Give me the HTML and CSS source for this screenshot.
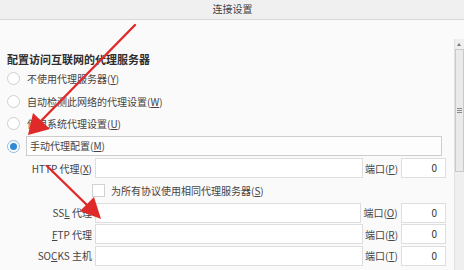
FILE: index.html
```html
<!DOCTYPE html>
<html lang="zh-CN">
<head>
    <meta charset="UTF-8">
    <title>连接设置</title>
    <link rel="stylesheet" href="styles.css">
</head>
<body>
    <div class="window">
        <div class="titlebar">连接设置</div>
        <div class="main">
            <div class="content">
                <h2 class="heading">配置访问互联网的代理服务器</h2>

                <label class="radio-row"><span class="radio"></span>不使用代理服务器(<u>Y</u>)</label>
                <label class="radio-row"><span class="radio"></span>自动检测此网络的代理设置(<u>W</u>)</label>
                <label class="radio-row"><span class="radio"></span>使用系统代理设置(<u>U</u>)</label>
                <label class="radio-row"><span class="radio checked"></span><span class="focus">手动代理配置(<u>M</u>)</span></label>

                <div class="proxy-row first">
                    <span class="proxy-label">HTTP 代理(<u>X</u>)</span>
                    <span class="field"></span>
                    <span class="port-label">端口(<u>P</u>)</span>
                    <span class="port">0</span>
                </div>
                <div class="check-row">
                    <span class="checkbox"></span>为所有协议使用相同代理服务器(<u>S</u>)
                </div>
                <div class="proxy-row">
                    <span class="proxy-label">SS<u>L</u> 代理</span>
                    <span class="field short"></span>
                    <span class="port-label">端口(<u>O</u>)</span>
                    <span class="port">0</span>
                </div>
                <div class="proxy-row">
                    <span class="proxy-label"><u>F</u>TP 代理</span>
                    <span class="field"></span>
                    <span class="port-label">端口(<u>R</u>)</span>
                    <span class="port">0</span>
                </div>
                <div class="proxy-row">
                    <span class="proxy-label">SO<u>C</u>KS 主机</span>
                    <span class="field"></span>
                    <span class="port-label">端口(<u>T</u>)</span>
                    <span class="port">0</span>
                </div>
            </div>
            <div class="scrollbar">
                <div class="scroll-up"></div>
                <div class="thumb"><span class="grip"></span></div>
                <div class="track"></div>
            </div>
        </div>

        <!-- annotation arrows drawn over the dialog -->
        <svg class="arrows" width="464" height="270" viewBox="0 0 464 270">
            <g stroke="#e02a2a" stroke-width="2.4" stroke-linecap="round" fill="#e02a2a">
                <line x1="135" y1="25" x2="38" y2="124"/>
                <polygon points="28,135 33,113 50,129" stroke="none"/>
                <line x1="47" y1="166" x2="90" y2="208"/>
                <polygon points="101,219 80,211 94,197" stroke="none"/>
            </g>
        </svg>
    </div>
</body>
</html>
```

FILE: styles.css
```css
body {
    margin: 0;
    font-family: "Noto Sans CJK SC", "Noto Sans", sans-serif;
    color: #3a3a3a;
    background: #fbfafb;
}

.window {
    position: relative;
    width: 464px;
    height: 270px;
    overflow: hidden;
    display: flex;
    flex-direction: column;
}

.titlebar {
    height: 19px;
    line-height: 17px;
    text-align: center;
    font-size: 10px;
    color: #444;
    background: #f1f0f1;
    border-bottom: 1px solid #d8d7d8;
    padding-left: 1px;
}

.main {
    flex: 1;
    display: flex;
}

.content {
    flex: 1;
    padding: 31px 0 0 7px;
}

.heading {
    margin: 0;
    font-size: 11px;
    font-weight: 600;
    line-height: 16px;
    color: #2e2e2e;
}

.radio-row {
    display: flex;
    align-items: center;
    height: 22.7px;
    font-size: 10px;
    color: #444;
}

.radio {
    width: 11px;
    height: 11px;
    border: 1px solid #cfcfcf;
    border-radius: 50%;
    background: #fff;
    margin-right: 7px;
    flex: none;
    display: flex;
    align-items: center;
    justify-content: center;
}

.radio.checked {
    border-color: #8fb8dc;
}

.radio.checked::after {
    content: "";
    width: 7px;
    height: 7px;
    border-radius: 50%;
    background: #2f8ad6;
}

.focus {
    flex: none;
    width: 411px;
    height: 18px;
    line-height: 18px;
    padding-left: 3px;
    margin-left: -1px;
    border: 1px solid #cdcdcd;
    background: #fdfdfd;
}

.proxy-row {
    display: flex;
    align-items: center;
    height: 19px;
    margin-top: 2.5px;
    font-size: 10px;
    color: #444;
}

.proxy-row.first {
    margin-top: 1px;
}

.proxy-label {
    width: 85px;
    text-align: right;
    margin-right: 3px;
}

.field {
    width: 266px;
    height: 18px;
    border: 1px solid #dedede;
    background: #fff;
}

.field.short {
    width: 264px;
}

.port-label {
    flex: 1;
    text-align: center;
    max-width: 37px;
    padding-right: 1px;
}

.field.short + .port-label {
    max-width: 39px;
}

.port {
    width: 35px;
    height: 18px;
    line-height: 18px;
    text-align: right;
    padding-right: 8px;
    border: 1px solid #dedede;
    background: #fff;
    font-size: 10px;
    color: #333;
}

.check-row {
    display: flex;
    align-items: center;
    height: 21px;
    margin-top: 2px;
    padding-left: 85px;
    font-size: 10px;
    color: #444;
}

.checkbox {
    width: 11px;
    height: 11px;
    border: 1px solid #d2d2d2;
    background: #fff;
    margin-right: 6px;
}

.scrollbar {
    width: 9px;
    margin-top: 19px;
    display: flex;
    flex-direction: column;
    background: #f0eff0;
    border-left: 1px solid #e2e2e2;
}

.scroll-up {
    height: 10px;
    position: relative;
}

.scroll-up::after {
    content: "";
    position: absolute;
    left: 2px;
    top: 4px;
    border-left: 2px solid transparent;
    border-right: 2px solid transparent;
    border-bottom: 3px solid #777;
}

.thumb {
    height: 121px;
    background: #ebeaeb;
    border: 1px solid #c9c9c9;
    display: flex;
    align-items: center;
    justify-content: center;
}

.grip {
    width: 5px;
    height: 5px;
    background: repeating-linear-gradient(#8a8a8a 0 1px, transparent 1px 2px);
}

.track {
    flex: 1;
}

.arrows {
    position: absolute;
    left: 0;
    top: 0;
    pointer-events: none;
}
```
